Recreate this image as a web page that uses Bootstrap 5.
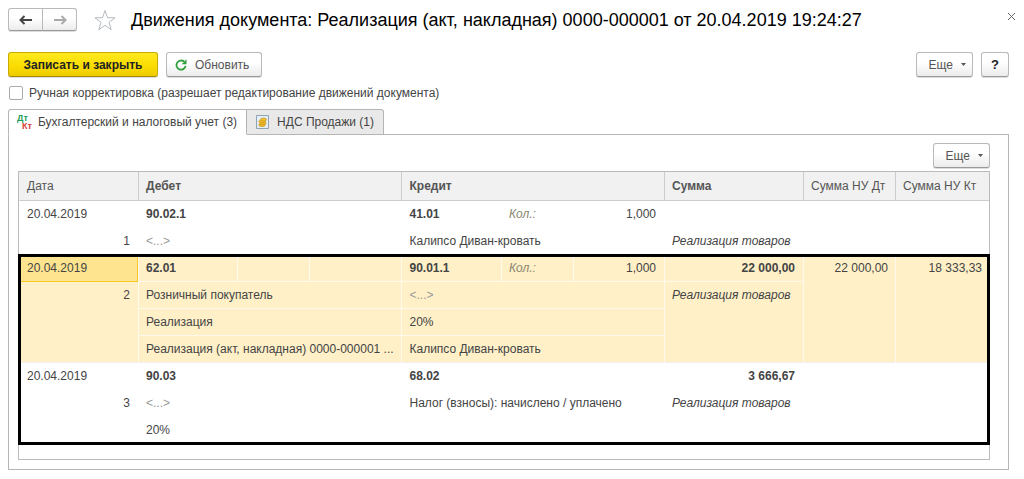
<!DOCTYPE html>
<html lang="ru">
<head>
<meta charset="utf-8">
<meta name="viewport" content="width=device-width, initial-scale=1">
<title>Движения документа</title>
<link href="https://cdn.jsdelivr.net/npm/bootstrap@5.3.0/dist/css/bootstrap.min.css" rel="stylesheet">
<style>
body { font-family: "Liberation Sans", Arial, sans-serif; font-size: 12px; line-height: 16px; color: #444; background: #fff; }
.page { padding: 8px 15px 8px 8px; }
.doc-title { font-size: 18px; line-height: 24px; color: #000; font-weight: 400; margin-left: 14px; }
.btn-tool { --bs-btn-font-size: 12px; --bs-btn-line-height: 16px; --bs-btn-padding-y: 3px; --bs-btn-padding-x: 12px;
  --bs-btn-border-radius: 3px; --bs-btn-color: #555; --bs-btn-border-color: #b9b9b9; --bs-btn-hover-border-color: #999; --bs-btn-active-border-color: #888;
  height: 25px; background: linear-gradient(#fff 40%, #ececec); border-bottom-color: #999; box-shadow: 0 1px 0 #ddd; }
.btn-save { min-width: 150px; --bs-btn-color: #222; --bs-btn-border-color: #c9ab00; --bs-btn-font-weight: 700; background: linear-gradient(#ffe91f, #fadb00 60%, #eecb00); border-bottom-color: #a58c00; }
.btn-step { --bs-btn-padding-x: 0; --bs-btn-padding-y: 0; width: 35px; height: 23px; }
.btn-more { width: 57px; --bs-btn-padding-x: 6px; }
.caret { width: 5px; height: 3px; background: #555; clip-path: polygon(0 0, 100% 0, 50% 100%); }
.btn-help { width: 28px; --bs-btn-padding-x: 0; --bs-btn-color: #222; --bs-btn-font-weight: 700; font-size: 13px; }
.btn-shut { line-height: 0; margin-right: -11px; }
.form-check-input.fix-check { width: 14px; height: 14px; border: 1px solid #aaa; border-radius: 2px; margin: 0 2px 0 1px; }
.tabs-line { margin-bottom: -1px; }
.tabs-line .nav-link { height: 26px; padding: 0 9px; border: 1px solid #b5b5b5; border-radius: 0; color: #444; background: #e9e9e9; }
.tabs-line .nav-link.active { color: #444; background: #fff; border-color: #b5b5b5; border-bottom-color: #fff; border-radius: 3px 0 0 0; padding-left: 8px; }
.tabs-line li + li .nav-link { border-left: 0; border-radius: 0 3px 0 0; }
.pane { border: 1px solid #b5b5b5; padding: 8px 18px 9px 9px; }
.pane-tools { margin-bottom: 3px; }
.grid-box { border: 1px solid #bbb; padding-bottom: 15px; }
.ledger { table-layout: fixed; width: 100%; border-collapse: separate; border-spacing: 0; }
.ledger th, .ledger td { height: 27px; padding: 0 8px 0 7px; border-left: 1px solid transparent; vertical-align: top; line-height: 26px; white-space: nowrap; }
.ledger thead th { height: 29px; line-height: 28px; background: #f1f1f1; border-bottom: 1px solid #ccc; color: #555; font-weight: 400; }
.ledger thead th + th { border-left-color: #ccc; }
.ledger thead th.strong { font-weight: 700; }
.c-date { width: 119px; } .c-kol { width: 72px; } .c-dnum { width: 92px; } .c-cnum { width: 91px; }
.c-sum { width: 139px; } .c-nudt { width: 92px; } .c-nukt { width: 94px; }
.ledger .nu { padding-right: 7px; }
.ledger .chosen td { background: #fff0c8; border-left-color: #fffaee; border-bottom: 1px solid #fffaee; }
.ledger .chosen .last-line, .ledger .chosen .tail { border-bottom-color: #f1f1f1; }
.ledger .chosen .focused { background: #ffe48f; border: 1px solid #f7c728; line-height: 24px; }
.framed { outline: 3px solid #000; outline-offset: -2px; }
.empty { color: #999; }
.kol { color: #8a8670; font-style: italic; }
</style>
</head>
<body>
<div class="page">
  <header class="d-flex align-items-start">
    <div class="btn-group">
      <button class="btn btn-tool btn-step d-flex align-items-center justify-content-center" type="button" aria-label="Назад">
        <svg width="14" height="10" viewBox="0 0 14 10"><path d="M5.500 1 1.500 5l4 4M2 5h11" fill="none" stroke="#444" stroke-width="2"/></svg>
      </button>
      <button class="btn btn-tool btn-step d-flex align-items-center justify-content-center" type="button" aria-label="Вперед">
        <svg width="14" height="10" viewBox="0 0 14 10"><path d="m8.500 1 4 4-4 4M12 5H1" fill="none" stroke="#aaa" stroke-width="2"/></svg>
      </button>
    </div>
    <button class="btn p-0 border-0 ms-3 lh-1" type="button" aria-label="В избранное">
      <svg width="24" height="23" viewBox="0 0 24 23"><path d="m12 2.500 2.500 7.200 7.500.1-6 4.600 2.200 7.300L12 17.300l-6.200 4.400L8 14.400 2 9.800l7.500-.1z" fill="#fff" stroke="#b4bac0"/></svg>
    </button>
    <h1 class="doc-title mb-0 flex-grow-1">Движения документа: Реализация (акт, накладная) 0000-000001 от 20.04.2019 19:24:27</h1>
    <button class="btn btn-shut p-1 border-0" type="button" aria-label="Закрыть">
      <svg width="9" height="9" viewBox="0 0 9 9"><path d="m1 1 7 7M8 1 1 8" stroke="#666" fill="none"/></svg>
    </button>
  </header>

  <div class="d-flex gap-2 pt-3 mt-1">
    <button class="btn btn-tool btn-save" type="button">Записать и закрыть</button>
    <button class="btn btn-tool d-flex align-items-center gap-2 ps-2" type="button">
      <svg width="12" height="12" viewBox="0 0 12 12"><path d="M9.200 2.700A4.600 4.600 0 1 0 10.600 7" fill="none" stroke="#2fa03c" stroke-width="1.800"/><path d="M11.500.3v5H6.700z" fill="#2fa03c"/></svg>
      Обновить
    </button>
    <button class="btn btn-tool btn-more d-flex align-items-center justify-content-end gap-2 ms-auto" type="button">Еще <span class="caret"></span></button>
    <button class="btn btn-tool btn-help" type="button">?</button>
  </div>

  <div class="d-flex align-items-center gap-1 my-2">
    <input class="form-check-input fix-check" type="checkbox" id="manual">
    <label for="manual">Ручная корректировка (разрешает редактирование движений документа)</label>
  </div>

  <ul class="nav tabs-line">
    <li class="nav-item"><a class="nav-link active d-flex align-items-center gap-1" href="#acc">
      <svg width="17" height="16" viewBox="0 0 17 16" font-family="Liberation Sans, sans-serif" font-size="9" font-weight="700"><text x="0" y="7" fill="#1f9d57">Дт</text><text x="5" y="15" fill="#d9403a">Кт</text></svg>
      Бухгалтерский и налоговый учет (3)</a></li>
    <li class="nav-item"><a class="nav-link d-flex align-items-center gap-2" href="#vat">
      <svg width="13" height="14" viewBox="0 0 13 14"><path d="M.5.500h12v13H.5z" fill="#e6eef5" stroke="#8fa3b5"/><g fill="#f6c32c" stroke="#b98512" stroke-width=".6"><ellipse cx="6" cy="10" rx="3.200" ry="1.500"/><ellipse cx="7" cy="8.200" rx="3.200" ry="1.500"/><ellipse cx="6" cy="6.400" rx="3.200" ry="1.500"/><ellipse cx="7.500" cy="4.600" rx="3" ry="1.500"/></g></svg>
      НДС Продажи (1)</a></li>
  </ul>

  <main class="pane" id="acc">
    <div class="pane-tools d-flex justify-content-end">
      <button class="btn btn-tool btn-more d-flex align-items-center justify-content-end gap-2" type="button">Еще <span class="caret"></span></button>
    </div>
    <div class="grid-box">
      <table class="ledger">
        <colgroup><col class="c-date"><col><col class="c-kol"><col class="c-dnum"><col><col class="c-kol"><col class="c-cnum"><col class="c-sum"><col class="c-nudt"><col class="c-nukt"></colgroup>
        <thead>
          <tr><th>Дата</th><th class="strong" colspan="3">Дебет</th><th class="strong" colspan="3">Кредит</th><th class="strong">Сумма</th><th>Сумма НУ Дт</th><th>Сумма НУ Кт</th></tr>
        </thead>
        <tbody>
          <tr><td>20.04.2019</td><td class="fw-bold" colspan="3">90.02.1</td><td class="fw-bold">41.01</td><td class="kol">Кол.:</td><td class="text-end">1,000</td><td></td><td></td><td></td></tr>
          <tr><td class="text-end">1</td><td class="empty" colspan="3">&lt;...&gt;</td><td colspan="3">Калипсо Диван-кровать</td><td class="fst-italic">Реализация товаров</td><td></td><td></td></tr>
        </tbody>
        <tbody class="framed">
          <tr class="chosen"><td class="focused">20.04.2019</td><td class="fw-bold">62.01</td><td></td><td></td><td class="fw-bold">90.01.1</td><td class="kol">Кол.:</td><td class="text-end">1,000</td><td class="fw-bold text-end">22 000,00</td><td class="text-end nu tail" rowspan="4">22 000,00</td><td class="text-end nu tail" rowspan="4">18 333,33</td></tr>
          <tr class="chosen"><td class="text-end tail" rowspan="3">2</td><td colspan="3">Розничный покупатель</td><td class="empty" colspan="3">&lt;...&gt;</td><td class="fst-italic tail" rowspan="3">Реализация товаров</td></tr>
          <tr class="chosen"><td colspan="3">Реализация</td><td colspan="3">20%</td></tr>
          <tr class="chosen"><td class="last-line" colspan="3">Реализация (акт, накладная) 0000-000001 ...</td><td class="last-line" colspan="3">Калипсо Диван-кровать</td></tr>
          <tr><td>20.04.2019</td><td class="fw-bold" colspan="3">90.03</td><td class="fw-bold" colspan="3">68.02</td><td class="fw-bold text-end">3 666,67</td><td></td><td></td></tr>
          <tr><td class="text-end">3</td><td class="empty" colspan="3">&lt;...&gt;</td><td colspan="3">Налог (взносы): начислено / уплачено</td><td class="fst-italic">Реализация товаров</td><td></td><td></td></tr>
          <tr><td></td><td colspan="3">20%</td><td colspan="3"></td><td></td><td></td><td></td></tr>
        </tbody>
      </table>
    </div>
  </main>
</div>
<script src="https://cdn.jsdelivr.net/npm/bootstrap@5.3.0/dist/js/bootstrap.bundle.min.js"></script>
</body>
</html>
